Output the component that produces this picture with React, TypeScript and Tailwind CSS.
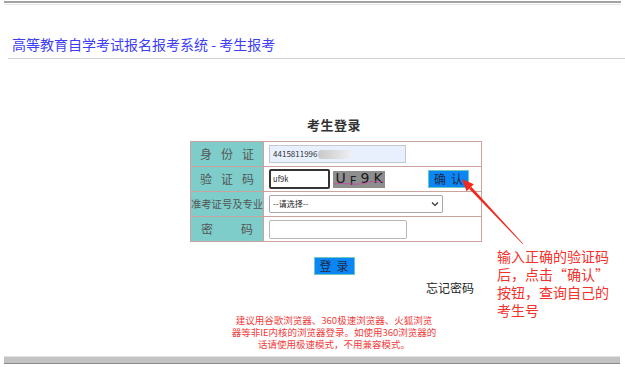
import React from "react";

const cjk = { fontFamily: '"Noto Sans CJK SC", "Noto Sans", sans-serif' };

function Label({ chars, gap, size = "text-[12px]" }: { chars: string[]; gap: string; size?: string }) {
  return (
    <td className="w-[72px] h-[25px] bg-[#7fcdcb] border border-[#c9a39c] p-0">
      <div className={`flex justify-center whitespace-nowrap leading-none text-[#555] ${gap} ${size}`}>
        {chars.map((c, i) => (
          <span key={i}>{c}</span>
        ))}
      </div>
    </td>
  );
}

function BlueButton({ a, b, className = "" }: { a: string; b: string; className?: string }) {
  return (
    <button
      className={`w-[41px] h-[18px] bg-[#0a86f7] border border-[#6dc8c0] flex items-center justify-between px-[5px] text-[12px] leading-none text-[#1e2a44] ${className}`}
    >
      <span>{a}</span>
      <span>{b}</span>
    </button>
  );
}

export default function App() {
  return (
    <div className="relative w-[625px] h-[367px] bg-white overflow-hidden" style={cjk}>
      {/* top edge */}
      <div className="pt-[1px]">
        <div className="h-[2px] mx-[4px] bg-[#a3a3a3]" />
        <div className="h-px mt-[1px] mx-[4px] bg-[#e6e6e6]" />
      </div>

      {/* header */}
      <div className="mt-[29px] ml-[8px] border-b border-[#d2d2d2] pb-[4px]">
        <h1 className="pl-[4px] text-[14px] leading-[20px] text-[#3d3df5]">
          高等教育自学考试报名报考系统 - 考生报考
        </h1>
      </div>

      {/* login form */}
      <div className="ml-[190px] w-[292px] mt-[57px] flex flex-col items-center">
        <h2 className="text-[13px] leading-[18px] font-bold text-[#333] tracking-[0.5px] -ml-[4px]">考生登录</h2>
        <table className="mt-[7px] w-[292px] border-collapse">
          <tbody>
            <tr>
              <Label chars={["身", "份", "证"]} gap="gap-[9px]" />
              <td className="border border-[#c9a39c] pl-[5px] p-0">
                <div className="w-[137px] h-[18px] bg-[#e8f0fe] border border-[#c4c8d0] flex items-center pl-[3px] text-[8px] text-[#333]">
                  4415811996
                  <span className="ml-[1px] w-[34px] h-[9px] bg-gradient-to-r from-[#c8c8c8] via-[#dcdcdc] to-[#eef0f6] rounded-sm" />
                </div>
              </td>
            </tr>
            <tr>
              <Label chars={["验", "证", "码"]} gap="gap-[9px]" />
              <td className="border border-[#c9a39c] pl-[5px] p-0">
                <div className="flex items-center">
                  <div className="w-[61px] h-[20px] border-2 border-[#333] rounded-[2px] flex items-center pl-[2px] text-[7.5px] text-[#222]">
                    uf9k
                  </div>
                  <div
                    className="relative ml-[3px] w-[52px] h-[17px] bg-[#8e8e8e] flex items-center justify-center gap-[4px] text-[14px] leading-none text-[#1c1c1c]"
                    style={{ fontFamily: '"DejaVu Sans", sans-serif' }}
                  >
                    <span className="-mt-[3px]">U</span>
                    <span className="mt-[3px] text-[12px]">F</span>
                    <span className="-mt-[2px]">9</span>
                    <span className="-mt-[2px]">K</span>
                    <svg className="absolute left-0 top-0" width="52" height="17" viewBox="0 0 52 17">
                      <path d="M1 13 C12 11, 22 15, 32 12 S46 12, 51 10" stroke="#c04a9a" strokeWidth="0.8" fill="none" />
                    </svg>
                  </div>
                  <BlueButton a="确" b="认" className="ml-[43px]" />
                </div>
              </td>
            </tr>
            <tr>
              <Label chars={["准考证号及专业"]} gap="gap-0" size="text-[10.3px]" />
              <td className="border border-[#c9a39c] pl-[5px] p-0">
                <div className="w-[174px] h-[18px] border border-[#a8a8a8] rounded-[2px] flex items-center justify-between px-[3px] text-[8px] text-[#222]">
                  <span>--请选择--</span>
                  <svg width="8" height="6" viewBox="0 0 8 6">
                    <path d="M1 1.5 L4 4.5 L7 1.5" stroke="#333" strokeWidth="1.2" fill="none" />
                  </svg>
                </div>
              </td>
            </tr>
            <tr>
              <Label chars={["密", "码"]} gap="gap-[28px]" />
              <td className="border border-[#c9a39c] pl-[5px] p-0">
                <div className="w-[138px] h-[19px] border border-[#b8b8b8] rounded-[2px]" />
              </td>
            </tr>
          </tbody>
        </table>

        <BlueButton a="登" b="录" className="mt-[15px] -ml-[4px]" />

        <div className="self-end mr-[8px] mt-[5px] text-[12px] leading-[16px] text-[#222]">忘记密码</div>

        <p className="mt-[18px] -ml-[4px] whitespace-nowrap text-center text-[9.5px] leading-[12px] text-[#f03c3c]">
          建议用谷歌浏览器、360极速浏览器、火狐浏览
          <br />
          器等非IE内核的浏览器登录。如使用360浏览器的
          <br />
          话请使用极速模式，不用兼容模式。
        </p>
      </div>

      {/* bottom bar */}
      <div className="absolute left-[4px] right-[5px] top-[356px]">
        <div className="h-px bg-[#e2e2e2]" />
        <div className="h-[6px] bg-[#c3c3c3]" />
        <div className="h-px bg-[#8a8a8a]" />
      </div>

      {/* annotation arrow */}
      <svg className="absolute left-[455px] top-[172px]" width="75" height="78" viewBox="0 0 75 78">
        <polygon points="16.3,14.7 14.1,16.8 67.8,72.2 68.2,71.8" fill="#f0281e" />
        <polygon points="7,7 18.8,12.3 11.6,19.2" fill="#f0281e" />
      </svg>

      {/* annotation text */}
      <div className="absolute left-[497px] top-[247px] w-[124px] whitespace-nowrap text-[14px] leading-[18px] text-[#f5302a]">
        输入正确的验证码
        <br />
        后，点击“确认”
        <br />
        按钮，查询自己的
        <br />
        考生号
      </div>
    </div>
  );
}
